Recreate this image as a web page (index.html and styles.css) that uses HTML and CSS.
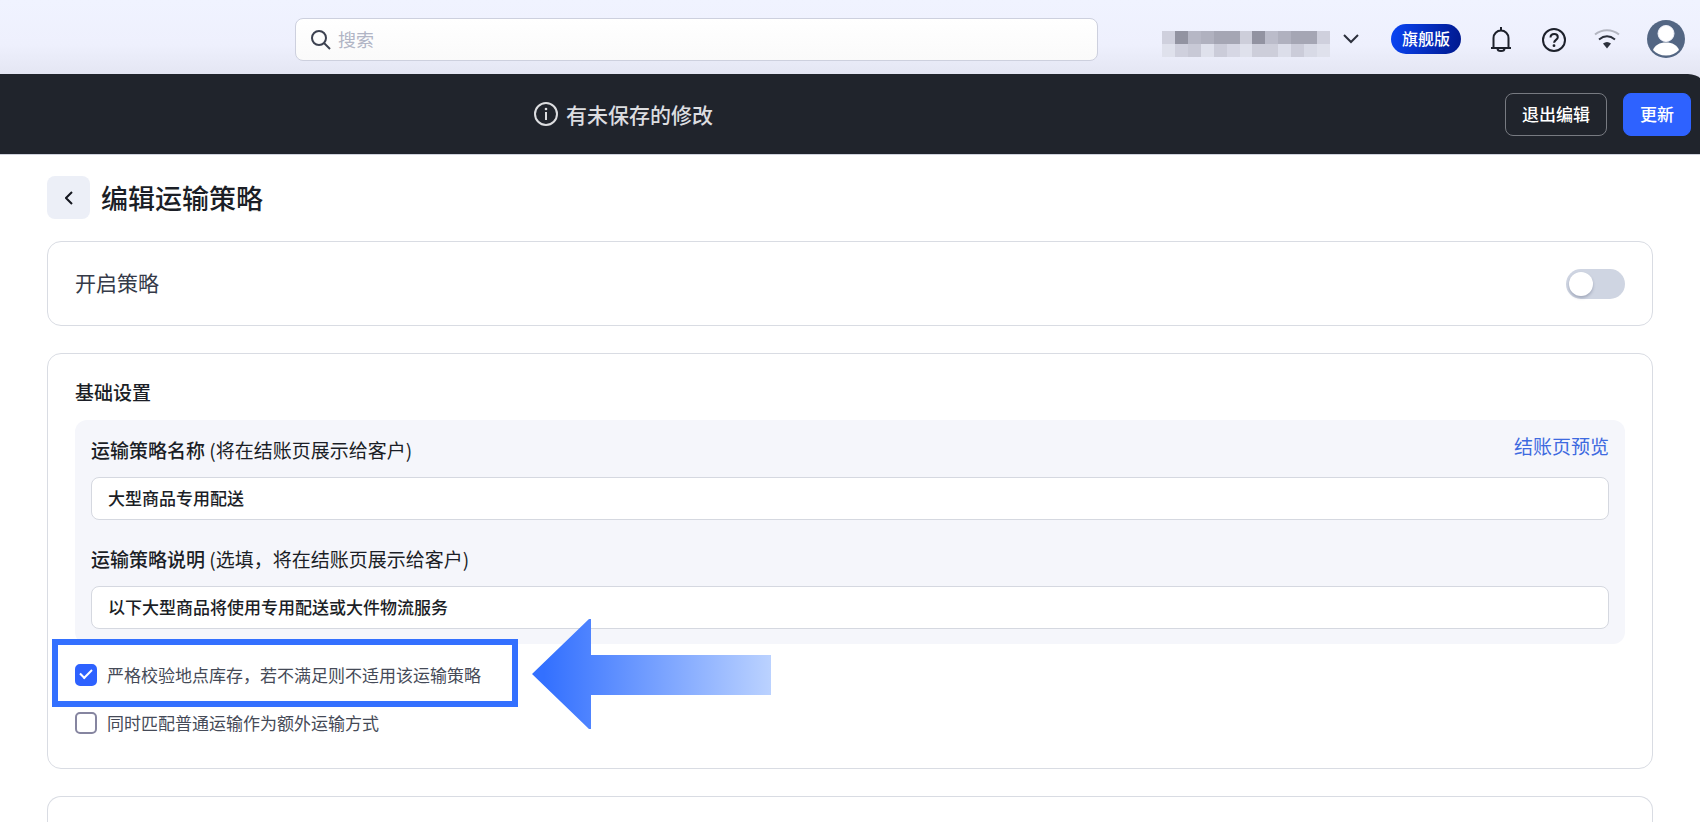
FILE: index.html
```html
<!DOCTYPE html>
<html lang="zh-CN">
<head>
    <meta charset="UTF-8">
    <meta name="viewport" content="width=device-width, initial-scale=1.0">
    <title>编辑运输策略</title>
    <link rel="stylesheet" href="styles.css">
</head>
<body>
    <div class="top">
        <header class="header">
            <label class="search">
                <svg width="20" height="20" viewBox="0 0 20 20" fill="none" stroke="#3c4150" stroke-width="2">
                    <circle cx="8" cy="8" r="7"/>
                    <path d="M13 13l6 6"/>
                </svg>
                <input type="search" placeholder="搜索" aria-label="搜索">
            </label>

            <div class="header-tools">
                <button class="store" type="button" aria-label="切换店铺">
                    <svg width="168" height="26" viewBox="0 0 13 2" preserveAspectRatio="none" shape-rendering="crispEdges">
                        <rect x="0" width="1" height="1" fill="#cfd0dd"/>
                        <rect x="1" width="1" height="1" fill="#9293a1"/>
                        <rect x="2" width="1" height="1" fill="#b6b7c5"/>
                        <rect x="3" width="1" height="1" fill="#b0b1bf"/>
                        <rect x="4" width="2" height="1" fill="#a5a6b4"/>
                        <rect x="6" width="1" height="1" fill="#cdceda"/>
                        <rect x="7" width="1" height="1" fill="#9293a1"/>
                        <rect x="8" width="1" height="1" fill="#bbbcca"/>
                        <rect x="9" width="1" height="1" fill="#b0b1bf"/>
                        <rect x="10" width="2" height="1" fill="#a5a6b4"/>
                        <rect x="12" width="1" height="1" fill="#cfd0dd"/>
                        <rect x="0" y="1" width="1" height="1" fill="#dfe1ec"/>
                        <rect x="1" y="1" width="1" height="1" fill="#cfd0dd"/>
                        <rect x="2" y="1" width="1" height="1" fill="#c8c9d6"/>
                        <rect x="3" y="1" width="1" height="1" fill="#dfe1ec"/>
                        <rect x="4" y="1" width="1" height="1" fill="#cbccd9"/>
                        <rect x="5" y="1" width="1" height="1" fill="#d6d7e4"/>
                        <rect x="6" y="1" width="1" height="1" fill="#dfe1ec"/>
                        <rect x="7" y="1" width="2" height="1" fill="#cdceda"/>
                        <rect x="9" y="1" width="1" height="1" fill="#dcdeea"/>
                        <rect x="10" y="1" width="1" height="1" fill="#cbccd9"/>
                        <rect x="11" y="1" width="1" height="1" fill="#d8dae6"/>
                        <rect x="12" y="1" width="1" height="1" fill="#dfe1ec"/>
                    </svg>
                    <svg class="caret" width="16" height="10" viewBox="0 0 16 10" fill="none" stroke="#2c303c" stroke-width="2">
                        <path d="M1 1l7 7 7-7"/>
                    </svg>
                </button>
                <span class="plan">旗舰版</span>
                <button class="icon-btn" type="button" aria-label="通知">
                    <svg width="26" height="26" viewBox="0 0 26 26" fill="none" stroke="#1d212b" stroke-width="2">
                        <path d="M13 1v3M3 22h20M5.500 22V12a7.500 7.500 0 0 1 15 0v10"/>
                        <path d="M9.500 22.500a3.500 2.500 0 0 0 7 0"/>
                    </svg>
                </button>
                <button class="icon-btn" type="button" aria-label="帮助">
                    <svg width="26" height="26" viewBox="0 0 26 26" fill="none" stroke="#1d212b" stroke-width="2">
                        <circle cx="13" cy="14" r="11"/>
                        <path d="M9.500 11.500c0-2 1.500-3.500 3.700-3.500s3.600 1.300 3.600 3.200c0 2.600-3.700 2.800-3.700 5.600"/>
                        <circle cx="13" cy="19.700" r="1.400" fill="#1d212b" stroke="none"/>
                    </svg>
                </button>
                <button class="icon-btn" type="button" aria-label="网络状态">
                    <svg width="26" height="26" viewBox="0 0 26 26" fill="none" stroke-width="2">
                        <path d="M1 8.500c7-5.700 17-5.700 24 0" stroke="#b3b6c1"/>
                        <path d="M5 13.500c5-4 11-4 16 0" stroke="#2c303c"/>
                        <path d="M9 17.500q4-3 8 0l-4 5z" fill="#2c303c"/>
                    </svg>
                </button>
                <button class="icon-btn" type="button" aria-label="账户">
                    <svg width="38" height="38" viewBox="0 0 38 38">
                        <circle cx="19" cy="19" r="19" fill="#536683"/>
                        <circle cx="19" cy="13.500" r="8" fill="#fff" stroke="#eef0fa"/>
                        <path d="M6 30c2-5 6.500-7.500 13-7.500s11 2.500 13 7.500c-3 3.500-7.500 5.500-13 5.500S9 33.500 6 30z" fill="#fff"/>
                    </svg>
                </button>
            </div>
        </header>

        <div class="save-bar">
            <p class="save-msg">
                <svg width="24" height="24" viewBox="0 0 24 24" fill="none" stroke="#dcdde0" stroke-width="2">
                    <circle cx="12" cy="12" r="11"/>
                    <path d="M12 10v8"/>
                    <circle cx="12" cy="7" r="1.300" fill="#dcdde0" stroke="none"/>
                </svg>
                有未保存的修改
            </p>
            <button class="btn" type="button">退出编辑</button>
            <button class="btn btn-primary" type="button">更新</button>
        </div>
    </div>

    <main class="main">
        <div class="title-row">
            <button class="back" type="button" aria-label="返回">
                <svg width="8" height="14" viewBox="0 0 8 14" fill="none" stroke="#14171f" stroke-width="2">
                    <path d="M7 1L1 7l6 6"/>
                </svg>
            </button>
            <h1>编辑运输策略</h1>
        </div>

        <section class="card enable">
            <label for="enable">开启策略</label>
            <input class="switch" type="checkbox" id="enable" role="switch">
        </section>

        <section class="card basic">
            <h2>基础设置</h2>
            <div class="panel">
                <div class="field-head">
                    <label for="name"><b>运输策略名称</b> (将在结账页展示给客户)</label>
                    <a href="#preview">结账页预览</a>
                </div>
                <input class="text-input" type="text" id="name" value="大型商品专用配送">
                <div class="field-head">
                    <label for="desc"><b>运输策略说明</b> (选填，将在结账页展示给客户)</label>
                </div>
                <input class="text-input" type="text" id="desc" value="以下大型商品将使用专用配送或大件物流服务">
            </div>

            <div class="options">
                <div class="option marked">
                    <input class="tick" type="checkbox" id="strict" checked>
                    <label for="strict">严格校验地点库存，若不满足则不适用该运输策略</label>
                    <svg class="arrow" width="240" height="110" viewBox="0 0 240 110">
                        <defs>
                            <linearGradient id="fade" x1="0" x2="1" y1="0" y2="0">
                                <stop offset="0.050" stop-color="#3370ff"/>
                                <stop offset="1" stop-color="#bbd2ff"/>
                            </linearGradient>
                        </defs>
                        <path d="M0 55L57 0h2v36h180v40H59v34h-2z" fill="url(#fade)"/>
                    </svg>
                </div>
                <div class="option">
                    <input class="tick" type="checkbox" id="extra">
                    <label for="extra">同时匹配普通运输作为额外运输方式</label>
                </div>
            </div>
        </section>

        <section class="card next"></section>
    </main>
</body>
</html>
```

FILE: styles.css
```css
*, *::before {
    box-sizing: border-box;
}

body {
    display: flex;
    flex-direction: column;
    margin: 0;
    min-height: 100vh;
    font-family: "Noto Sans CJK SC", sans-serif;
    font-size: 17px;
    color: #1b1e26;
    background-color: #fff;
}

h1, h2, p {
    margin: 0;
}

svg {
    display: block;
    flex: none;
}

button, input {
    font: inherit;
    color: inherit;
}

button {
    padding: 0;
    border: none;
    background: none;
    cursor: pointer;
}

/* Top area */
.top {
    background-color: #e4e6f3;
    border-bottom: 1px solid #cfd2dc;
    overflow: hidden;
}

.header {
    display: flex;
    align-items: center;
    gap: 64px;
    height: 74px;
    padding: 0 15px 0 295px;
    background: linear-gradient(#f0f3ff, #eef0fd 60%, #e4e6f3);
}

.search {
    flex: 1;
    display: flex;
    align-items: center;
    gap: 7px;
    height: 43px;
    margin-top: 5px;
    padding: 0 15px;
    border: 1px solid #cdd0de;
    border-radius: 8px;
    background: linear-gradient(#fff, #fafafa);
}

.search input {
    flex: 1;
    padding: 0 0 2px;
    border: none;
    outline: none;
    background: none;
    font-size: 18px;
}

.search input::placeholder {
    color: #b1b5c5;
}

.header-tools {
    display: flex;
    align-items: center;
    gap: 27px;
    margin-top: 4px;
}

.store {
    display: flex;
    align-items: center;
    gap: 13px;
    margin-right: 5px;
}

.store svg:first-child {
    margin-top: 10px;
}

.plan {
    width: 70px;
    height: 30px;
    border-radius: 15px;
    font-size: 16px;
    font-weight: 500;
    line-height: 28px;
    text-align: center;
    color: #fff;
    background: linear-gradient(100deg, #0a45f5, #00188c);
}

.save-bar {
    display: flex;
    align-items: center;
    gap: 16px;
    height: 80px;
    margin-right: -8px;
    padding: 0 17px 0 534px;
    border-top-right-radius: 20px;
    background-color: #20242c;
}

.save-msg {
    flex: 1;
    display: flex;
    align-items: center;
    gap: 8px;
    font-size: 21px;
    font-weight: 500;
    line-height: 24px;
    color: #dcdde0;
}

.btn {
    height: 43px;
    padding: 0 16px 2px;
    border: 1px solid #777a81;
    border-radius: 8px;
    font-weight: 500;
    color: #fff;
}

.btn-primary {
    border-color: #2e62ff;
    background-color: #2e62ff;
}

/* Page content */
.main {
    flex: 1;
    display: flex;
    flex-direction: column;
    gap: 27px;
    padding: 21px 47px 0;
}

.title-row {
    display: flex;
    align-items: center;
    gap: 11px;
    height: 43px;
    margin-bottom: -5px;
}

.back {
    display: flex;
    align-items: center;
    justify-content: center;
    width: 43px;
    height: 43px;
    border-radius: 8px;
    background-color: #eceff7;
}

h1 {
    font-size: 27px;
    font-weight: 500;
    line-height: 40px;
}

.card {
    padding: 27px;
    border: 1px solid #d9dce3;
    border-radius: 14px;
}

.enable {
    display: flex;
    align-items: center;
    justify-content: space-between;
    height: 85px;
    font-size: 21px;
    color: #353a48;
}

.enable label {
    padding-bottom: 3px;
}

.switch {
    appearance: none;
    width: 59px;
    height: 30px;
    margin: 0;
    padding: 3px;
    border-radius: 15px;
    background-color: #cfd5e2;
    cursor: pointer;
}

.switch::before {
    content: "";
    display: block;
    width: 24px;
    height: 24px;
    border-radius: 50%;
    background-color: #fff;
    box-shadow: 0 2px 3px rgba(60, 70, 100, 0.3);
}

.switch:checked {
    background-color: #2e62ff;
}

.switch:checked::before {
    margin-left: auto;
}

.basic {
    padding: 26px 27px 32px;
}

h2 {
    margin-bottom: 16px;
    font-size: 19px;
    font-weight: 500;
    line-height: 24px;
}

.panel {
    padding: 16px 16px 15px;
    border-radius: 12px;
    background-color: #f5f6fb;
}

.field-head {
    display: flex;
    justify-content: space-between;
    margin-bottom: 14px;
    font-size: 19px;
    line-height: 27px;
}

.field-head b {
    font-weight: 500;
}

.field-head a {
    line-height: 20px;
    color: #3e6ae0;
    text-decoration: none;
}

.text-input {
    display: block;
    width: 100%;
    height: 43px;
    padding: 0 16px 2px;
    border: 1px solid #d5d8e0;
    border-radius: 8px;
    font-weight: 500;
    background-color: #fff;
}

.text-input + .field-head {
    margin-top: 25px;
}

.options {
    display: flex;
    flex-direction: column;
    gap: 21px;
    margin-top: 17px;
}

.option {
    display: flex;
    align-items: center;
    gap: 10px;
    line-height: 27px;
    color: #454a57;
}

.tick {
    appearance: none;
    display: grid;
    place-items: center;
    width: 22px;
    height: 22px;
    margin: 0;
    border: 2px solid #8685a0;
    border-radius: 5px;
    background-color: #fff;
}

.tick:checked {
    border-color: #2e62ff;
    background-color: #2e62ff;
}

.tick:checked::before {
    content: "";
    width: 12px;
    height: 7px;
    margin-bottom: 4px;
    border: solid #fff;
    border-width: 0 0 2px 2px;
    transform: rotate(-45deg);
}

/* Highlight frame and arrow around the first option */
.marked {
    position: relative;
    isolation: isolate;
}

.marked::before {
    content: "";
    position: absolute;
    z-index: -1;
    top: -22px;
    left: -23px;
    width: 466px;
    height: 68px;
    border: 6px solid #3370ff;
    background-color: #fff;
}

.arrow {
    position: absolute;
    top: -42px;
    left: 457px;
}

/* Continues below the fold */
.next {
    flex: 1;
    padding: 0;
    border-bottom: none;
    border-radius: 14px 14px 0 0;
}
```
